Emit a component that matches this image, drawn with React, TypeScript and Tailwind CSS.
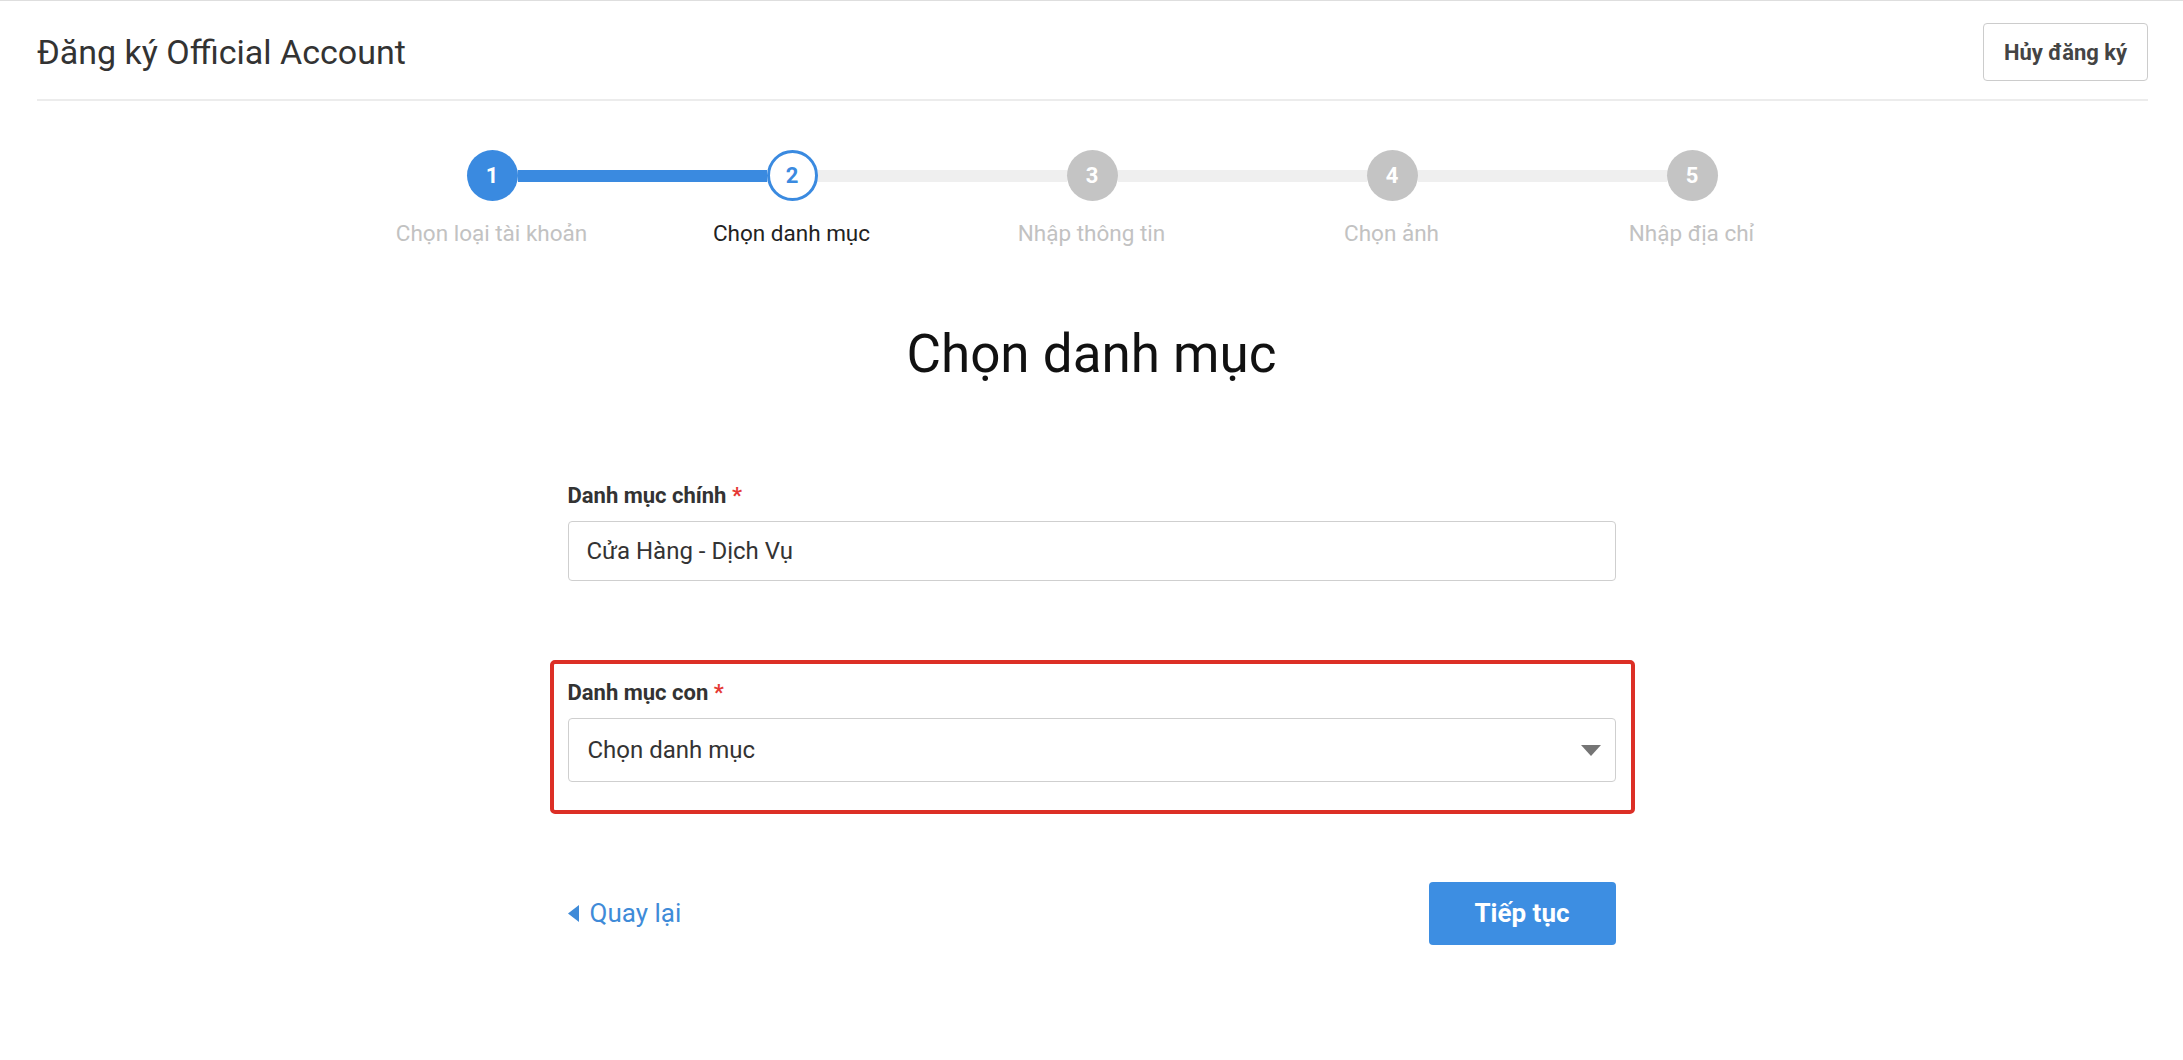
const steps = [
  { id: 1, label: "Chọn loại tài khoản", state: "done" },
  { id: 2, label: "Chọn danh mục", state: "current" },
  { id: 3, label: "Nhập thông tin", state: "todo" },
  { id: 4, label: "Chọn ảnh", state: "todo" },
  { id: 5, label: "Nhập địa chỉ", state: "todo" },
];

function StepCircle({ id, state }: { id: number; state: string }) {
  if (state === "done") {
    return (
      <div className="flex h-[51px] w-[51px] shrink-0 items-center justify-center rounded-full bg-[#3a8ae0] text-[22px] font-bold text-white">
        {id}
      </div>
    );
  }
  if (state === "current") {
    return (
      <div className="flex h-[51px] w-[51px] shrink-0 items-center justify-center rounded-full border-[3px] border-[#3a8ae0] bg-white text-[22px] font-bold text-[#3a8ae0]">
        {id}
      </div>
    );
  }
  return (
    <div className="flex h-[51px] w-[51px] shrink-0 items-center justify-center rounded-full bg-[#c4c4c4] text-[22px] font-bold text-white">
      {id}
    </div>
  );
}

function Stepper() {
  return (
    <div className="mx-auto mt-[49px] w-[1500px]">
      <div className="flex items-center px-[125px]">
        {steps.map((step, i) => (
          <div key={step.id} className="flex items-center">
            {i > 0 && (
              <div className={i === 1 ? "h-[12px] w-[249px] bg-[#3a8ae0]" : "h-[12px] w-[249px] bg-[#efefef]"} />
            )}
            <StepCircle id={step.id} state={step.state} />
          </div>
        ))}
      </div>
      <div className="mt-[19px] grid grid-cols-5">
        {steps.map((step) => (
          <p
            key={step.id}
            className={
              step.state === "current"
                ? "text-center text-[22.5px] leading-[26px] text-[#222]"
                : "text-center text-[22.5px] leading-[26px] text-[#c2c2c2]"
            }
          >
            {step.label}
          </p>
        ))}
      </div>
    </div>
  );
}

export default function App() {
  return (
    <div className="min-h-screen border-t border-[#dedede] bg-white font-['Roboto',sans-serif] text-[#333]">
      <header className="ml-[37px] mr-[35px] flex h-[100px] items-center justify-between border-b-2 border-[#ececec] pt-1">
        <h1 className="text-[34px] font-normal text-[#333]">Đăng ký Official Account</h1>
        <button className="h-[58px] w-[165px] rounded-[4px] border border-[#cccccc] bg-white text-[22px] font-bold text-[#444]">
          Hủy đăng ký
        </button>
      </header>

      <Stepper />

      <h2 className="mt-[82px] text-center text-[53px] leading-none font-normal text-[#111]">Chọn danh mục</h2>

      <div className="mx-auto mt-[104px] w-[1048px]">
        <label className="block text-[22px] leading-[22px] font-bold text-[#333]">
          Danh mục chính <span className="text-[#e53935]">*</span>
        </label>
        <div className="mt-[14px] flex h-[60px] items-center rounded-[4px] border border-[#cfcfcf] px-[18px] text-[24px] text-[#333]">
          Cửa Hàng - Dịch Vụ
        </div>

        <div className="relative mt-[101px]">
          <div className="pointer-events-none absolute -top-[22px] -right-[19px] -bottom-[32px] -left-[18px] rounded-[5px] border-4 border-[#dc2f26]" />
          <label className="block text-[22px] leading-[22px] font-bold text-[#333]">
            Danh mục con <span className="text-[#e53935]">*</span>
          </label>
          <div className="mt-[14px] flex h-[64px] items-center justify-between rounded-[4px] border border-[#cfcfcf] pr-[14px] pl-[19px] text-[24px] text-[#333]">
            <span>Chọn danh mục</span>
            <svg width="20" height="11" viewBox="0 0 20 11">
              <path d="M0 0 L20 0 L10 11 Z" fill="#757575" />
            </svg>
          </div>
        </div>

        <div className="mt-[100px] flex items-center justify-between">
          <a className="flex items-center gap-[11px] text-[26px] text-[#3f8bd8]">
            <svg width="11" height="17" viewBox="0 0 11 17">
              <path d="M11 0 L11 17 L0 8.5 Z" fill="#3f8bd8" />
            </svg>
            Quay lại
          </a>
          <button className="h-[63px] w-[187px] rounded-[4px] bg-[#3d8ee2] text-[26px] font-bold text-white">
            Tiếp tục
          </button>
        </div>
      </div>
    </div>
  );
}
